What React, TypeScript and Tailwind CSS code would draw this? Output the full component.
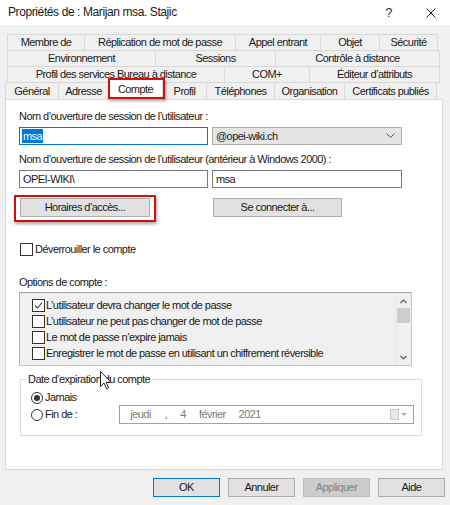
import React from "react";

type Tab = { label: string; w: string };

const backRows: Tab[][] = [
  [
    { label: "Membre de", w: "w-[78px]" },
    { label: "Réplication de mot de passe", w: "w-[152px]" },
    { label: "Appel entrant", w: "w-[86px]" },
    { label: "Objet", w: "w-[60px]" },
    { label: "Sécurité", w: "w-[59px]" },
  ],
  [
    { label: "Environnement", w: "w-[149px]" },
    { label: "Sessions", w: "w-[121px]" },
    { label: "Contrôle à distance", w: "w-[165px]" },
  ],
  [
    { label: "Profil des services Bureau à distance", w: "w-[218px]" },
    { label: "COM+", w: "w-[86px]" },
    { label: "Éditeur d’attributs", w: "w-[131px]" },
  ],
];

const frontRow: Tab[] = [
  { label: "Général", w: "w-[54px]" },
  { label: "Adresse", w: "w-[51px]" },
  { label: "Compte", w: "w-[55px]" },
  { label: "Profil", w: "w-[45px]" },
  { label: "Téléphones", w: "w-[69px]" },
  { label: "Organisation", w: "w-[71px]" },
  { label: "Certificats publiés", w: "w-[93px]" },
];

const options = [
  { label: "L’utilisateur devra changer le mot de passe", checked: true },
  { label: "L’utilisateur ne peut pas changer de mot de passe", checked: false },
  { label: "Le mot de passe n’expire jamais", checked: false },
  { label: "Enregistrer le mot de passe en utilisant un chiffrement réversible", checked: false },
];

const CheckBox = ({ checked = false }: { checked?: boolean }) => (
  <span className="w-[13px] h-[13px] shrink-0 border border-[#333333] bg-white flex items-center justify-center">
    {checked && (
      <svg width="9" height="9" viewBox="0 0 9 9">
        <path d="M1 4.5 L3.5 7 L8 1.5" fill="none" stroke="#333" strokeWidth="1.1" />
      </svg>
    )}
  </span>
);

const Radio = ({ checked = false }: { checked?: boolean }) => (
  <span className="w-[12px] h-[12px] shrink-0 rounded-full border border-[#333333] bg-white flex items-center justify-center">
    {checked && <span className="w-[6px] h-[6px] rounded-full bg-[#333333]" />}
  </span>
);

export default function App() {
  return (
    <div className="w-[450px] h-[505px] bg-[#f0f0f0] text-[11px] leading-[13px] tracking-[-0.55px] text-[#1a1a1a] font-['Liberation_Sans',Arial,sans-serif] overflow-hidden">
      {/* Title bar */}
      <div className="h-[25px] bg-white flex items-center pl-[8px] pr-[14px]">
        <span className="text-[12px] tracking-[-0.4px]">Propriétés de : Marijan msa. Stajic</span>
        <span className="ml-auto text-[13px] text-[#333]">?</span>
        <svg className="ml-[34px]" width="10" height="10" viewBox="0 0 10 10">
          <path d="M0.5 0.5 L9.5 9.5 M9.5 0.5 L0.5 9.5" stroke="#222" strokeWidth="1" />
        </svg>
      </div>

      {/* Tab rows */}
      <div className="mt-[9px] pl-[7px]">
        {backRows.map((row, i) => (
          <div key={i} className="flex h-[17px] -mt-px first:mt-0">
            {row.map((t, j) => (
              <div
                key={t.label}
                className={`${t.w} h-[17px] border border-[#d9d9d9] bg-[#f0f0f0] flex items-center justify-center ${
                  j > 0 ? "-ml-px" : ""
                }`}
              >
                {t.label}
              </div>
            ))}
          </div>
        ))}
      </div>
      <div className="flex pl-[5px] h-[17px] -mt-px relative z-10">
        {frontRow.map((t, j) =>
          t.label === "Compte" ? (
            <div key={t.label} className={`${t.w} relative -ml-px`}>
              <div className="absolute left-0 right-0 top-[-3px] h-[21px] bg-white border border-b-0 border-[#d9d9d9] flex items-center justify-center pb-[2px]">
                {t.label}
              </div>
              <div className="absolute left-[0px] right-[-2px] top-[-4px] h-[21px] border-2 border-[#d01010] shadow-[1px_2px_3px_rgba(0,0,0,0.35)]" />
            </div>
          ) : (
            <div
              key={t.label}
              className={`${t.w} h-[17px] border border-b-0 border-[#d9d9d9] bg-[#f0f0f0] flex items-center justify-center ${
                j > 0 ? "-ml-px" : ""
              }`}
            >
              {t.label}
            </div>
          )
        )}
      </div>

      {/* Panel */}
      <div className="ml-[5px] w-[438px] h-[371px] bg-white border border-[#d9d9d9] pl-[13px] pr-[30px] pt-[10px]">
        <div className="h-[13px]">Nom d’ouverture de session de l’utilisateur :</div>
        <div className="flex gap-[4px] mt-[4px]">
          <div className="w-[189px] h-[18px] border border-[#0078d7] flex items-center pl-[2px]">
            <span className="bg-[#0078d7] text-white px-px leading-[14px]">msa</span>
          </div>
          <div className="w-[190px] h-[18px] border border-[#adadad] bg-[#e5e5e5] flex items-center pl-[3px] pr-[6px]">
            <span>@opei-wiki.ch</span>
            <svg className="ml-auto" width="9" height="6" viewBox="0 0 9 6">
              <path d="M0.5 0.5 L4.5 4.5 L8.5 0.5" fill="none" stroke="#555" strokeWidth="1" />
            </svg>
          </div>
        </div>

        <div className="h-[13px] mt-[8px]">Nom d’ouverture de session de l’utilisateur (antérieur à Windows 2000) :</div>
        <div className="flex gap-[4px] mt-[4px]">
          <div className="w-[189px] h-[18px] border border-[#7a7a7a] flex items-center pl-[3px]">OPEI-WIKI\</div>
          <div className="w-[190px] h-[18px] border border-[#7a7a7a] flex items-center pl-[3px]">msa</div>
        </div>

        <div className="flex mt-[10px] h-[19px]">
          <div className="relative ml-px">
            <div className="w-[130px] h-[19px] border border-[#adadad] bg-[#e1e1e1] flex items-center justify-center">
              Horaires d’accès...
            </div>
            <div className="absolute left-[-6px] right-[-6px] top-[-3px] bottom-[-5px] border-2 border-[#d01010] shadow-[1px_2px_3px_rgba(0,0,0,0.35)]" />
          </div>
          <div className="ml-[63px] w-[129px] h-[19px] border border-[#adadad] bg-[#e1e1e1] flex items-center justify-center">
            Se connecter à...
          </div>
        </div>

        <div className="flex items-center gap-[2px] mt-[26px] h-[13px] ml-px">
          <CheckBox />
          <span>Déverrouiller le compte</span>
        </div>

        <div className="h-[13px] mt-[20px]">Options de compte :</div>
        <div className="mt-[3px] w-[393px] h-[74px] border border-[#c8c8c8] border-t-[#a0a0a0] border-l-[#b0b0b0] bg-[#f0f0f0] flex">
          <div className="flex-1 pl-[12px] pt-[6px] flex flex-col gap-[3px]">
            {options.map((o) => (
              <div key={o.label} className="flex items-center gap-[1px] h-[13px]">
                <CheckBox checked={o.checked} />
                <span>{o.label}</span>
              </div>
            ))}
          </div>
          <div className="w-[16px] bg-[#f0f0f0] flex flex-col items-center border-l border-[#e6e6e6]">
            <svg className="mt-[6px]" width="7" height="5" viewBox="0 0 7 5">
              <path d="M0.5 4 L3.5 1 L6.5 4" fill="none" stroke="#606060" strokeWidth="1.2" />
            </svg>
            <div className="mt-[4px] w-[13px] h-[15px] bg-[#cdcdcd]" />
            <svg className="mt-auto mb-[5px]" width="7" height="5" viewBox="0 0 7 5">
              <path d="M0.5 1 L3.5 4 L6.5 1" fill="none" stroke="#606060" strokeWidth="1.2" />
            </svg>
          </div>
        </div>

        <div className="relative">
          <fieldset className="mt-[7px] ml-px w-[402px] border border-[#dcdcdc] pl-[10px] pb-[11px]">
            <legend className="ml-[-5px] px-[2px]">Date d’expiration du compte</legend>
            <div className="flex items-center gap-[2px] mt-[5px] h-[13px]">
              <Radio checked />
              <span>Jamais</span>
            </div>
            <div className="flex items-center mt-[1px] h-[19px]">
              <Radio />
              <span className="ml-[2px]">Fin de :</span>
              <div className="ml-[42px] w-[295px] h-[19px] border border-[#a0a0a0] bg-white flex items-center text-[#7a7a7a] pr-[6px]">
                <span className="ml-[10px]">jeudi</span>
                <span className="ml-[14px]">,</span>
                <span className="ml-[13px]">4</span>
                <span className="ml-[13px]">février</span>
                <span className="ml-[13px]">2021</span>
                <span className="ml-auto w-[9px] h-[11px] border border-[#c8c8c8] bg-[#e8e8e8]" />
                <svg className="ml-[2px]" width="6" height="4" viewBox="0 0 6 4">
                  <path d="M0 0 L6 0 L3 3 Z" fill="#b0b0b0" />
                </svg>
              </div>
            </div>
          </fieldset>
          {/* mouse pointer */}
          <svg className="absolute left-[81px] top-[-2px]" width="12" height="19" viewBox="0 0 12 19">
            <path d="M0.5 0.5 L0.5 15.5 L4 12 L6.5 17.8 L8.6 16.9 L6.2 11.3 L11 11.3 Z" fill="white" stroke="#222" strokeWidth="1" />
          </svg>
        </div>
      </div>

      {/* Bottom buttons */}
      <div className="flex justify-end gap-[8px] pr-[5px] mt-[8px]">
        <div className="w-[67px] h-[19px] border border-[#0078d7] bg-[#e1e1e1] flex items-center justify-center">OK</div>
        <div className="w-[67px] h-[19px] border border-[#adadad] bg-[#e1e1e1] flex items-center justify-center">Annuler</div>
        <div className="w-[67px] h-[19px] border border-[#bfbfbf] bg-[#cccccc] text-[#838383] flex items-center justify-center">Appliquer</div>
        <div className="w-[67px] h-[19px] border border-[#adadad] bg-[#e1e1e1] flex items-center justify-center">Aide</div>
      </div>
    </div>
  );
}
